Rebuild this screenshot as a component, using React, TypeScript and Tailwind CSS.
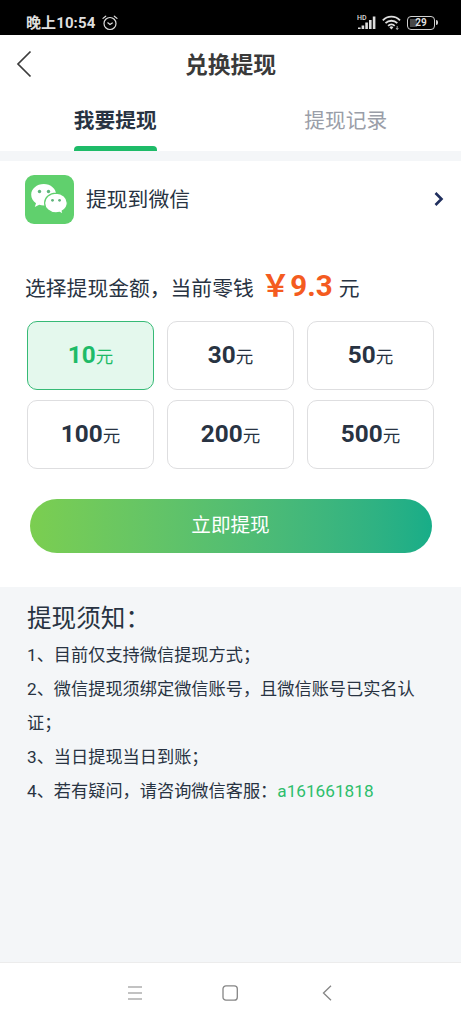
import { useState } from 'react'

const amounts = [10, 30, 50, 100, 200, 500]

const tabs = ['我要提现', '提现记录']

function StatusBar() {
  return (
    <div className="flex h-[35px] items-center bg-black pt-[10px] pr-[23px] pl-[26px] text-[#dedede]">
      <span className="text-[15px] leading-[20px] font-bold tracking-[0.1px] whitespace-nowrap">晚上10:54</span>
      <svg className="ml-[7px] h-4 w-4" viewBox="0 0 16 16" fill="none" stroke="currentColor" strokeWidth="1.2" strokeLinecap="round">
        <circle cx="8" cy="8.5" r="6" />
        <path d="M1 3.4 3.7 1.2M15 3.4 12.3 1.2M5.8 7.8 8 9.5l2.3-1.5" />
      </svg>
      <div className="ml-auto flex items-center">
        {/* Mobile signal */}
        <svg className="h-[15px] w-[19px]" viewBox="0 0 19 15" fill="currentColor">
          <text x="0" y="5" fontSize="7" fontWeight="500" fontFamily="Roboto">HD</text>
          <path d="M1 12.4h2.6V14H1zM4.6 10.4h2.6V14H4.6zM8.3 7.5h2.6V14H8.3zM12 5h2.6v9H12zM15.8 1.5h2.6V14h-2.6z" />
        </svg>
        {/* Wifi */}
        <svg className="ml-[6px] h-[15px] w-[19px]" viewBox="0 0 19 15" fill="none" stroke="currentColor" strokeWidth="1.8">
          <path d="M.8 5.3a12 12 0 0 1 17.2 0M3.5 8.2a8.3 8.3 0 0 1 11.8 0M6.1 10.8a4.8 4.8 0 0 1 6.6 0" />
          <path d="M9.4 14.4 7.4 12.3a2.8 2.8 0 0 1 4 0z" fill="currentColor" stroke="none" />
          <path d="M15.2 11v3.5M14 13l1.2 1.500 1.200-1.500" strokeWidth=".7" />
        </svg>
        {/* Battery */}
        <div className="ml-[6px] flex h-[14px] w-[28px] items-center rounded-[4px] border-[1.5px] border-[#d0d0d0] p-[2px]">
          <div className="flex h-full w-full items-center justify-center bg-linear-to-r from-[#484848] from-30% to-black to-30% text-[10px] leading-none font-bold">
            29
          </div>
        </div>
        <div className="ml-px h-[5px] w-[2px] rounded-r-sm bg-[#d0d0d0]" />
      </div>
    </div>
  )
}

function WechatIcon() {
  return (
    <svg className="h-[49px] w-[49px]" viewBox="0 0 49 49">
      <rect width="49" height="49" rx="9" fill="#60d06d" />
      <path
        d="M18.8 9C11.8 9 6.2 13.8 6.2 19.8c0 3.4 1.8 6.4 4.8 8.4l-1.2 3.7 4.4-2.2c1.5.4 3 .7 4.6.7 7 0 12.4-4.7 12.4-10.6S25.7 9 18.8 9z"
        fill="#fff"
      />
      <path
        d="M31 18.1c-6.3 0-11.4 4.4-11.4 9.9s5.1 9.9 11.4 9.9c1.3 0 2.5-.2 3.6-.5l3.6 1.8-1-3.2c3-1.8 5.1-4.7 5.1-8 0-5.5-5-9.9-11.3-9.9z"
        fill="#fff"
        stroke="#60d06d"
        strokeWidth="1.2"
      />
      <g fill="#60b47c">
        <circle cx="14.5" cy="16.5" r="1.7" />
        <circle cx="23.5" cy="16.5" r="1.7" />
        <circle cx="27.5" cy="25.3" r="1.4" />
        <circle cx="34.6" cy="25.3" r="1.4" />
      </g>
    </svg>
  )
}

export default function App() {
  const [activeTab, setActiveTab] = useState(0)
  const [amount, setAmount] = useState(10)

  return (
    <div className="flex h-[1024px] w-[461px] flex-col bg-[#f4f6f8] font-[Roboto,'Noto_Sans_CJK_SC',sans-serif] text-[#283342]">
      <StatusBar />

      {/* Page title */}
      <header className="grid h-[58px] grid-cols-[60px_1fr_60px] items-center bg-white">
        <button className="pl-[16px]">
          <svg className="h-[28px] w-[16px]" viewBox="0 0 16 28" fill="none" stroke="#3c3c3c" strokeWidth="1.7">
            <path d="M14.5 1.5 2 14l12.5 12.5" />
          </svg>
        </button>
        <h1 className="pt-[3px] text-center text-[22.8px] leading-[30px] font-bold text-[#3a3a3a]">兑换提现</h1>
      </header>

      {/* Tabs */}
      <nav className="grid h-[58px] grid-cols-2 bg-white">
        {tabs.map((tab, index) => (
          <button key={tab} onClick={() => setActiveTab(index)} className="flex flex-col items-center justify-between pt-[13px]">
            <span
              className={
                index === activeTab
                  ? 'text-[20.7px] leading-[30px] font-bold'
                  : 'text-[20.7px] leading-[30px] text-[#9a9ea8]'
              }
            >
              {tab}
            </span>
            {index === activeTab && <span className="h-[5px] w-[83px] rounded-t-[4px] bg-[#1ebb68]" />}
          </button>
        ))}
      </nav>

      {/* Withdraw form */}
      <main className="mt-[10px] h-[426px] bg-white">
        <div className="flex items-center pt-[14px] pr-[17px] pl-[25px]">
          <WechatIcon />
          <span className="ml-[12px] text-[20.8px] leading-[30px]">提现到微信</span>
          <svg className="mt-[-2px] ml-auto h-[16px] w-[10px]" viewBox="0 0 10 16" fill="none" stroke="#202f5e" strokeWidth="2.6">
            <path d="m1.5 2 6 6-6 6" />
          </svg>
        </div>

        <p className="mt-[42px] flex h-[40px] items-baseline pl-[25px] text-[20.8px] leading-[40px] whitespace-nowrap">
          选择提现金额，当前零钱
          <strong className="ml-[7px] text-[29.5px] font-bold text-[#f45b20]">￥9.3</strong>
          <span className="ml-[6px]">元</span>
        </p>

        <div className="mt-[15px] grid grid-cols-[127px_127px_127px] gap-x-[13px] gap-y-[10px] pl-[27px]">
          {amounts.map((value) => (
            <button
              key={value}
              onClick={() => setAmount(value)}
              className={
                value === amount
                  ? 'h-[69px] rounded-[10px] border border-[#36ba76] bg-[#e4f8ed] text-[#1ebb68]'
                  : 'h-[69px] rounded-[10px] border border-[#dedee0] bg-white'
              }
            >
              <span className="text-[24.3px] font-bold">{value}</span>
              <span className="text-[17.5px]">元</span>
            </button>
          ))}
        </div>

        <button className="mt-[30px] ml-[29.5px] block h-[53.5px] w-[402px] rounded-full bg-linear-to-r from-[#7bce50] to-[#17ad88] text-[19.6px] text-white">
          立即提现
        </button>
      </main>

      {/* Notes */}
      <section className="flex-1 pt-[13px] pr-[30px] pl-[27px] text-[17.2px] leading-[34px]">
        <h2 className="mb-px text-[24.6px] leading-[37px]">提现须知：</h2>
        <p>1、目前仅支持微信提现方式；</p>
        <p>2、微信提现须绑定微信账号，且微信账号已实名认证；</p>
        <p>3、当日提现当日到账；</p>
        <p>
          4、若有疑问，请咨询微信客服：<span className="text-[#2dbe6c]">a161661818</span>
        </p>
      </section>

      {/* System navigation */}
      <footer className="flex h-[62px] items-center border-t border-[#ececec] bg-white pb-px pl-[127px] text-[#858585]">
        <svg className="h-[16px] w-[16px]" viewBox="0 0 16 16" fill="none" stroke="currentColor" strokeWidth="1.2">
          <path d="M1 2h14M1 8h14M1 14h14" />
        </svg>
        <svg className="ml-[79px] h-[16px] w-[16px]" viewBox="0 0 16 16" fill="none" stroke="currentColor" strokeWidth="1.3">
          <rect x="1" y=".8" width="14.3" height="14.4" rx="3" />
        </svg>
        <svg className="ml-[84px] h-[16px] w-[10px]" viewBox="0 0 10 16" fill="none" stroke="currentColor" strokeWidth="1.3">
          <path d="M9 .8 1.5 8 9 15.2" />
        </svg>
      </footer>
    </div>
  )
}
